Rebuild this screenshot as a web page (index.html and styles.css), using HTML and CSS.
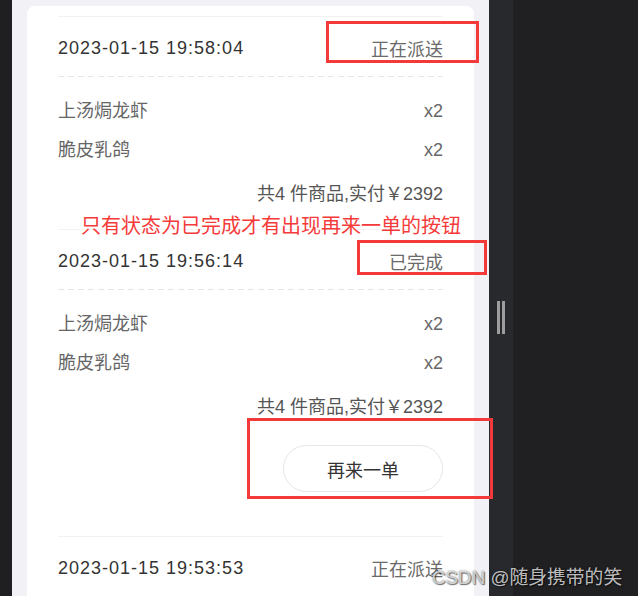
FILE: index.html
```html
<!DOCTYPE html>
<html lang="zh-CN">
<head>
    <meta charset="UTF-8">
    <meta name="viewport" content="width=device-width, initial-scale=1.0">
    <title>我的订单</title>
    <link rel="stylesheet" href="styles.css">
</head>
<body>
    <div class="screen">
        <div class="edge"></div>
        <div class="preview">
            <div class="card">
                <div class="order">
                    <div class="order-head">
                        <span class="time">2023-01-15 19:58:04</span>
                        <span class="state">正在派送</span>
                    </div>
                    <div class="goods">
                        <div class="good"><span>上汤焗龙虾</span><span>x2</span></div>
                        <div class="good"><span>脆皮乳鸽</span><span>x2</span></div>
                    </div>
                    <div class="total">共4 件商品,实付￥2392</div>
                </div>
                <div class="order">
                    <div class="order-head">
                        <span class="time">2023-01-15 19:56:14</span>
                        <span class="state">已完成</span>
                    </div>
                    <div class="goods">
                        <div class="good"><span>上汤焗龙虾</span><span>x2</span></div>
                        <div class="good"><span>脆皮乳鸽</span><span>x2</span></div>
                    </div>
                    <div class="total">共4 件商品,实付￥2392</div>
                    <div class="again-row">
                        <button class="again">再来一单</button>
                    </div>
                </div>
                <div class="order">
                    <div class="order-head">
                        <span class="time">2023-01-15 19:53:53</span>
                        <span class="state">正在派送</span>
                    </div>
                </div>
            </div>
        </div>
        <div class="gutter">
            <div class="handle"><i></i><i></i></div>
        </div>
        <div class="dark"></div>

        <!-- annotations drawn over the screenshot -->
        <div class="note">只有状态为已完成才有出现再来一单的按钮</div>
        <div class="mark mark-1"></div>
        <div class="mark mark-2"></div>
        <div class="mark mark-3"></div>
        <div class="watermark">CSDN @随身携带的笑</div>
    </div>
</body>
</html>
```

FILE: styles.css
```css
body{
    margin: 0px;
    padding: 0px;
    background-color: #202022;
    font-family: "Liberation Sans", "Noto Sans CJK SC", sans-serif;
}
.screen{
    position: relative;
    display: flex;
    width: 638px;
    height: 596px;
    overflow: hidden;
}
.edge{
    width: 12px;
    background-color: #1f1f21;
}
.preview{
    width: 447px;
    padding: 6px 15px 0px;
    background-color: #f1f1f6;
}
.card{
    height: 100%;
    padding: 10px 31px 0px;
    box-sizing: border-box;
    background-color: white;
    border-radius: 8px 8px 0px 0px;
}
.order{
    border-top: solid 1px #f2f2f2;
    padding-bottom: 16px;
}
.order-head{
    height: 56px;
    display: flex;
    align-items: center;
    justify-content: space-between;
    font-size: 18px;
    background: repeating-linear-gradient(to right, #e6e6e6 0px, #e6e6e6 6px, transparent 6px, transparent 10px) left bottom / 100% 1px no-repeat;
    padding: 3px 0px 1px;
}
.time{
    color: #333;
    letter-spacing: 1px;
}
.state{
    color: #6a6a6a;
}
.goods{
    padding-top: 15px;
}
.good{
    display: flex;
    justify-content: space-between;
    line-height: 39px;
    font-size: 18px;
    color: #666;
}
.total{
    margin-top: 5px;
    line-height: 38px;
    font-size: 18px;
    color: #555;
    text-align: right;
}
.again-row{
    display: flex;
    justify-content: flex-end;
    padding: 19px 0px 28px;
}
.again{
    width: 160px;
    height: 47px;
    border: solid 1px #e6e6e6;
    border-radius: 24px;
    background-color: white;
    color: #333;
    font-size: 18px;
    font-family: "Liberation Sans", "Noto Sans CJK SC", sans-serif;
    cursor: pointer;
}
.gutter{
    width: 24px;
    background-color: #28292d;
    display: flex;
    align-items: center;
}
.handle{
    display: flex;
    gap: 2px;
    margin: 0px 0px 0px 8px;
    padding-top: 39px;
}
.handle i{
    display: block;
    width: 3px;
    height: 33px;
    background-color: #9d9d9d;
}
.dark{
    flex: 1;
    background-color: #202022;
}
.note{
    position: absolute;
    left: 81px;
    top: 213px;
    font-size: 20px;
    line-height: 24px;
    color: #f53a3a;
    font-family: "Noto Sans CJK SC", sans-serif;
}
.mark{
    position: absolute;
    border: solid 3px #f23a3a;
    box-sizing: border-box;
}
.mark-1{
    left: 326px;
    top: 21px;
    width: 153px;
    height: 42px;
}
.mark-2{
    left: 357px;
    top: 240px;
    width: 130px;
    height: 35px;
}
.mark-3{
    left: 247px;
    top: 418px;
    width: 246px;
    height: 81px;
}
.watermark{
    position: absolute;
    left: 432px;
    top: 565px;
    font-size: 18.8px;
    line-height: 26px;
    color: rgba(235, 235, 235, 0.8);
    text-shadow: 0px 0px 2px rgba(0, 0, 0, 0.6), 1px 1px 1px rgba(0, 0, 0, 0.5);
}
```
